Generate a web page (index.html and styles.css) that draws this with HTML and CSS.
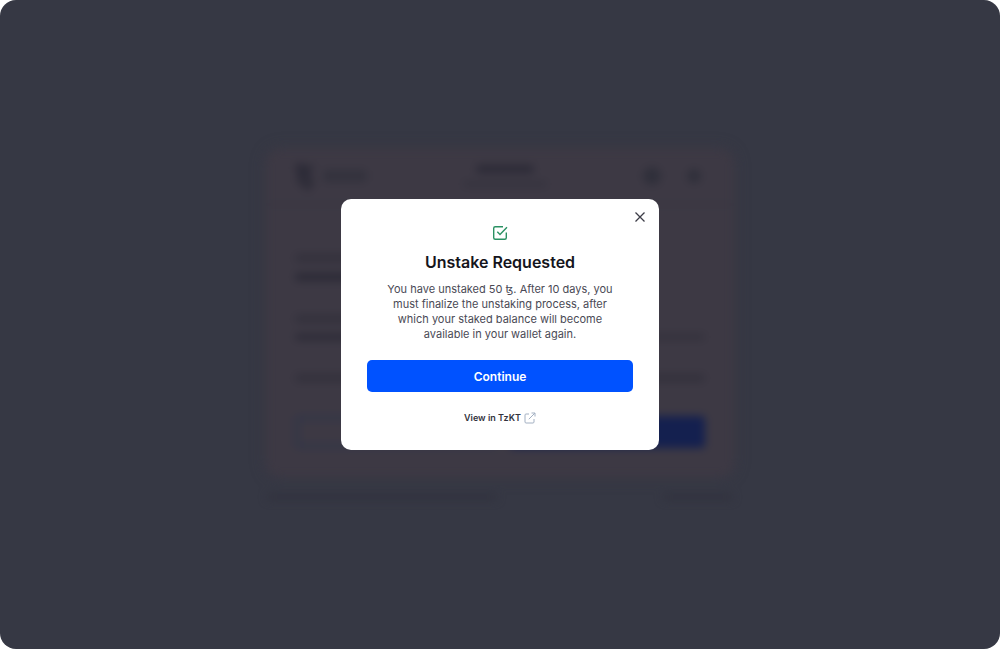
FILE: index.html
```html
<!DOCTYPE html>
<html lang="en">
<head>
  <meta charset="UTF-8" />
  <meta name="viewport" content="width=device-width, initial-scale=1.0" />
  <title>Unstake Requested</title>
  <link rel="stylesheet" href="styles.css">
</head>
<body>
  <div class="screen">
    <!-- dimmed account page behind the modal -->
    <div class="page" aria-hidden="true">
      <div class="account">
        <div class="account-header">
          <div class="brand">
            <svg class="brand-logo" viewBox="0 0 20 28" fill="none" stroke="currentColor" stroke-width="5">
              <path d="M5 1v16c0 4 3 5 6 5M0 6h15L9 14c9 0 9 12 1 12" />
            </svg>
            <span class="bar brand-name"></span>
          </div>
          <div class="wallet">
            <span class="bar wallet-name"></span>
            <span class="bar wallet-address"></span>
          </div>
          <div class="actions">
            <span class="dot"></span>
            <span class="dot small"></span>
          </div>
        </div>
        <div class="account-body">
          <div class="field">
            <span class="bar label"></span>
            <span class="bar value"></span>
          </div>
          <div class="field">
            <span class="bar label"></span>
            <div class="field-row">
              <span class="bar value thin"></span>
              <span class="bar value thin faint"></span>
            </div>
          </div>
          <div class="field-row">
            <span class="bar value faint"></span>
            <span class="bar value faint"></span>
          </div>
          <div class="field-row buttons">
            <span class="outline-box"></span>
            <span class="blue-box"></span>
          </div>
        </div>
      </div>
      <div class="page-footer">
        <span class="bar footer-text"></span>
        <span class="bar footer-link"></span>
      </div>
    </div>

    <div class="modal" role="dialog" aria-modal="true" aria-labelledby="modal-title">
      <button type="button" class="close-btn" aria-label="Close">
        <svg width="12" height="12" viewBox="0 0 12 12" fill="none" stroke="currentColor" stroke-width="1.3">
          <path d="M1.5 1.5l9 9M10.5 1.5l-9 9" />
        </svg>
      </button>
      <svg class="check-icon" width="16" height="16" viewBox="0 0 16 16" fill="none" stroke="currentColor" stroke-width="1.4">
        <path d="M11 1.7H3.2c-.9 0-1.5.6-1.5 1.5v9.6c0 .9.6 1.5 1.5 1.5h9.6c.9 0 1.5-.6 1.5-1.5V7.5" />
        <path d="M5.3 6.8L8 9.5l7-7.2" />
      </svg>
      <h1 id="modal-title">Unstake Requested</h1>
      <p>You have unstaked 50 ꜩ. After 10 days, you must finalize the unstaking process, after which your staked balance will become available in your wallet again.</p>
      <button type="button" class="continue-btn">Continue</button>
      <a href="#" class="view-link">
        View in TzKT
        <svg width="12" height="12" viewBox="0 0 12 12" fill="none" stroke="currentColor" stroke-width="1">
          <path d="M5 2H2c-.6 0-1 .4-1 1v7c0 .6.4 1 1 1h7c.6 0 1-.4 1-1V7" />
          <path d="M7.5 1H11v3.5M11 1L4.8 7.2" />
        </svg>
      </a>
    </div>
  </div>
</body>
</html>
```

FILE: styles.css
```css
* {
  box-sizing: border-box;
}

body {
  margin: 0;
  background: #fff;
  font-family: Inter, "DejaVu Sans", sans-serif;
}

.screen {
  display: grid;
  place-items: center;
  min-height: 100vh;
  border-radius: 16px;
  background: #363844;
  overflow: hidden;
}

/* both layers share the one grid cell */
.page,
.modal {
  grid-area: 1 / 1;
}

.page {
  width: 100%;
  max-width: 466px;
  color: #2b2a36;
  filter: blur(4px);
}

.account {
  background: #3d3944;
  border-radius: 12px;
  box-shadow: 0 0 12px #3d3944;
}

.account-header {
  display: flex;
  justify-content: space-between;
  align-items: center;
  height: 56px;
  padding: 0 32px 0 28px;
  border-bottom: 3px solid #383641;
}

.brand,
.actions {
  display: flex;
  align-items: center;
  gap: 8px;
}

.actions {
  gap: 26px;
}

.brand-logo {
  width: 20px;
  height: 28px;
}

.bar {
  display: block;
  height: 8px;
  border-radius: 4px;
  background: #2b2a36;
}

.brand-name {
  width: 44px;
  height: 12px;
  background: #33323d;
}

.wallet {
  display: flex;
  flex-direction: column;
  align-items: center;
  gap: 8px;
}

.wallet-name {
  width: 58px;
}

.wallet-address {
  width: 84px;
  height: 6px;
  background: #35333e;
}

.dot {
  width: 18px;
  height: 18px;
  border-radius: 50%;
  background: #2f2f3a;
}

.dot.small {
  width: 14px;
  height: 14px;
}

.account-body {
  display: flex;
  flex-direction: column;
  gap: 34px;
  padding: 48px 28px 28px;
}

.field {
  display: flex;
  flex-direction: column;
  gap: 11px;
}

.field-row {
  display: flex;
  justify-content: space-between;
}

.label {
  width: 60px;
  background: #33313c;
}

.value {
  width: 80px;
}

.thin {
  height: 6px;
}

.faint {
  background: #33313c;
}

.buttons {
  gap: 12px;
}

.outline-box,
.blue-box {
  flex: 1;
  height: 32px;
  border-radius: 4px;
}

.outline-box {
  border: 4px solid #303548;
}

.blue-box {
  background: #14204f;
}

.page-footer {
  display: flex;
  justify-content: space-between;
  padding-top: 18px;
}

.page-footer .bar {
  height: 6px;
  background: #31323e;
}

.footer-text {
  width: 230px;
}

.footer-link {
  width: 70px;
}

.modal {
  position: relative;
  display: flex;
  flex-direction: column;
  align-items: center;
  width: 100%;
  max-width: 318px;
  padding: 26px 26px 24px;
  border-radius: 10px;
  background: #fff;
  text-align: center;
}

.close-btn {
  position: absolute;
  top: 7px;
  right: 8px;
  display: flex;
  align-items: center;
  justify-content: center;
  width: 22px;
  height: 22px;
  padding: 0;
  border: none;
  background: none;
  color: #3d3d47;
  cursor: pointer;
}

.check-icon {
  color: #2b9163;
}

h1 {
  margin: 9px 0 8px;
  color: #15151c;
  font-size: 16px;
  font-weight: 600;
  line-height: 24px;
}

p {
  max-width: 230px;
  margin: 0 0 18px;
  color: #4a4a55;
  font-size: 11px;
  line-height: 15px;
}

.continue-btn {
  width: 100%;
  height: 32px;
  border: none;
  border-radius: 5px;
  background: #0052ff;
  color: #fff;
  font-family: inherit;
  font-size: 12px;
  font-weight: 600;
  cursor: pointer;
}

.continue-btn:hover {
  background: #0047dd;
}

.view-link {
  display: flex;
  align-items: center;
  gap: 3px;
  margin-top: 18px;
  color: #33333d;
  font-size: 9px;
  font-weight: 600;
  line-height: 16px;
  text-decoration: none;
}

.view-link svg {
  color: #a3b0c2;
}
```
